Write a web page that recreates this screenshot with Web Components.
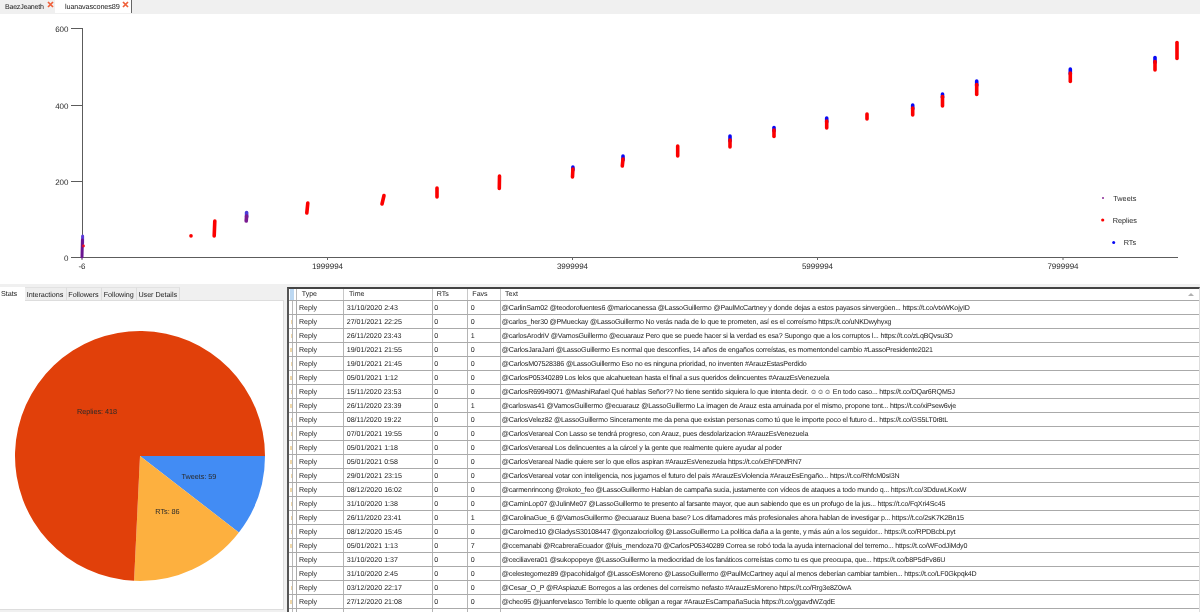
<!DOCTYPE html>
<html>
<head>
<meta charset="utf-8">
<title>Tweets</title>
<style>
  html, body { margin: 0; padding: 0; height: 100%; overflow: hidden; background: #f0f0f0; }
  body { font-family: "Liberation Sans", Arial, sans-serif; color: #222; text-rendering: geometricPrecision; }
  app-shell { filter: blur(0.3px); }
</style>
</head>
<body>
<app-shell>
  <doc-tabs slot="tabs"></doc-tabs>
  <scatter-chart slot="chart"></scatter-chart>
  <side-panel slot="side">
    <pie-chart></pie-chart>
  </side-panel>
  <tweet-grid slot="grid"></tweet-grid>
</app-shell>

<script>
// Outer layout: tab strip, chart, then the two bottom panes
class AppShell extends HTMLElement {
  constructor() {
    super();
    this.attachShadow({ mode: 'open' });
    this.shadowRoot.innerHTML = `
      <style>
        :host { display: flex; flex-direction: column; width: 1200px; height: 612px; overflow: hidden; }
        .bottom { display: flex; flex: 1; min-height: 0; gap: 3px; background: #f0f0f0; }
      </style>
      <slot name="tabs"></slot>
      <slot name="chart"></slot>
      <div class="bottom">
        <slot name="side"></slot>
        <slot name="grid"></slot>
      </div>
    `;
  }
}

// Top strip with the closable account tabs
class DocTabs extends HTMLElement {
  constructor() {
    super();
    this.attachShadow({ mode: 'open' });
  }

  connectedCallback() {
    const close = `<svg width="7" height="7" viewBox="0 0 7 7"><path d="M1 1L6 6M6 1L1 6" stroke="#f0603a" stroke-width="1.7"/></svg>`;
    this.shadowRoot.innerHTML = `
      <style>
        :host { display: flex; height: 14px; background: #f0f0f0; color: #222; box-sizing: border-box; white-space: nowrap; }
        .tab { display: flex; align-items: center; height: 13px; box-sizing: border-box; flex: none; }
        .one { width: 55px; padding-left: 5px; gap: 3px; font-size: 7.1px; letter-spacing: -0.25px; }
        .two { width: 77px; padding-left: 10px; gap: 2px; font-size: 7.3px; letter-spacing: -0.15px; background: #fff; border-right: 1px solid #666; }
        svg { display: block; flex: none; margin-top: -4px; }
      </style>
      <div class="tab one"><span>BaezJeaneth</span>${close}</div>
      <div class="tab two"><span>luanavascones89</span>${close}</div>
    `;
  }
}

// Scatter plot, points are drawn as short strokes per tweet cluster
class ScatterChart extends HTMLElement {
  constructor() {
    super();
    this.attachShadow({ mode: 'open' });
  }

  connectedCallback() {
    // x1, y1 (top), x2, y2 (bottom), blue part on top in px
    const clusters = [
      [191, 235.7, 191, 235.9, 0],
      [214.8, 221, 214.2, 236, 0],
      [307.8, 203, 306.8, 213, 0],
      [384, 195.5, 382, 204, 0],
      [437, 188, 437, 197, 0],
      [499.5, 176, 499.3, 188.5, 0],
      [572.9, 167, 572.5, 177, 2],
      [623, 156, 622.3, 166, 3],
      [677.7, 146, 677.7, 156, 0],
      [730, 136, 730, 147, 4],
      [774, 127.5, 774, 136.5, 2.5],
      [826.7, 118, 826.7, 128, 3],
      [867, 114, 867, 119, 0],
      [912.7, 105, 912.7, 115, 3],
      [942.5, 94, 942.5, 106, 2.5],
      [976.7, 81, 976.7, 94.5, 3.5],
      [1070.3, 69, 1070.3, 81.5, 4],
      [1155, 57.5, 1155, 70, 4],
      [1177, 42.5, 1177, 58.5, 0]
    ];
    let pts = '';
    for (const [x1, y1, x2, y2, blue] of clusters) {
      if (blue) pts += `<line x1="${x1}" y1="${y1}" x2="${x1}" y2="${y1 + blue + 1}" stroke="#0808f4" stroke-width="3.6" stroke-linecap="round"/>`;
      pts += `<line x1="${x1}" y1="${y1 + blue}" x2="${x2}" y2="${y2}" stroke="#fb0000" stroke-width="3.6" stroke-linecap="round"/>`;
    }
    const yTicks = [[600, 14], [400, 91], [200, 167], [0, 243]];
    const xTicks = [['-6', 82], ['1999994', 327.5], ['3999994', 572.5], ['5999994', 817.5], ['7999994', 1063]];
    this.shadowRoot.innerHTML = `
      <style>
        :host { display: block; height: 270px; background: #fff; }
        svg { display: block; }
        text { font-family: "Liberation Sans", Arial, sans-serif; font-size: 8px; fill: #2a2a2a; }
        .lg { font-size: 7.3px; }
      </style>
      <svg width="1200" height="270" viewBox="0 14 1200 270" xmlns="http://www.w3.org/2000/svg">
        <path d="M82.5 28V257.5H1178" fill="none" stroke="#5c5c5c" stroke-width="1"/>
        ${yTicks.map(([v, y]) => `
          <line x1="71" x2="82" y1="${y + 14.5}" y2="${y + 14.5}" stroke="#5c5c5c"/>
          <text x="68.5" y="${y + 17.5}" text-anchor="end">${v}</text>`).join('')}
        ${xTicks.map(([v, x]) => `
          <line x1="${x}" x2="${x}" y1="257" y2="260" stroke="#666"/>
          <text x="${x}" y="269" text-anchor="middle">${v}</text>`).join('')}
        <line x1="82.6" y1="236" x2="82.6" y2="243" stroke="#5a3ad8" stroke-width="3" stroke-linecap="round"/>
        <line x1="82.4" y1="240" x2="82" y2="257" stroke="#6a1590" stroke-width="3" stroke-linecap="round"/>
        <circle cx="83.5" cy="246" r="1.4" fill="#f01020"/>
        <line x1="246.6" y1="212.5" x2="246.6" y2="217" stroke="#4a3ad8" stroke-width="3.6" stroke-linecap="round"/>
        <line x1="246.6" y1="216" x2="246.2" y2="221" stroke="#7a1a90" stroke-width="3.6" stroke-linecap="round"/>
        ${pts}
        <circle cx="1103" cy="198" r="1" fill="#8a2a96"/>
        <text class="lg" x="1113.3" y="200.7">Tweets</text>
        <circle cx="1102.7" cy="220" r="1.6" fill="#fb0000"/>
        <text class="lg" x="1112.7" y="222.7">Replies</text>
        <circle cx="1113.7" cy="242.5" r="1.5" fill="#0808f4"/>
        <text class="lg" x="1123.7" y="245">RTs</text>
      </svg>
    `;
  }
}

// Left pane with the WinForms style tabs
class SidePanel extends HTMLElement {
  constructor() {
    super();
    this.attachShadow({ mode: 'open' });
  }

  connectedCallback() {
    const tabs = ['Stats', 'Interactions', 'Followers', 'Following', 'User Details'];
    const widths = [24.5, 42, 35, 35.5, 42.5];
    this.shadowRoot.innerHTML = `
      <style>
        :host { display: flex; flex-direction: column; width: 284px; box-sizing: border-box; padding: 3px 0 2px; font-size: 7.2px; letter-spacing: -0.05px; color: #222; white-space: nowrap; }
        .bar { display: flex; height: 13px; align-items: flex-end; }
        .tab { height: 13px; box-sizing: border-box; border-right: 1px solid #ddd; border-top: 1px solid #e2e2e2; background: #eee; line-height: 13px; text-align: center; }
        .tab.on { background: #fff; border: 0; text-align: left; padding-left: 1px; height: 14px; margin-bottom: -1px; position: relative; line-height: 13px; }
        .body { flex: 1; min-height: 0; overflow: hidden; background: #fff; border: 1px solid #ddd; border-left: 0; }
      </style>
      <div class="bar">
        ${tabs.map((t, i) => `<div class="tab ${i === 0 ? 'on' : ''}" style="width:${widths[i]}px">${t}</div>`).join('')}
      </div>
      <div class="body"><slot></slot></div>
    `;
  }
}

// Pie drawn from the series values, clockwise from 3 o'clock
class PieChart extends HTMLElement {
  constructor() {
    super();
    this.attachShadow({ mode: 'open' });
  }

  connectedCallback() {
    const series = [
      { name: 'Tweets', value: 59, color: '#428cf4', lx: 199, ly: 478 },
      { name: 'RTs', value: 86, color: '#fdb03f', lx: 167.5, ly: 512.7 },
      { name: 'Replies', value: 418, color: '#e1400a', lx: 97, ly: 412.5 }
    ];
    const total = series.reduce((s, a) => s + a.value, 0);
    const cx = 140, cy = 455, r = 125;
    // pane body starts at y=300
    const top = 300;
    let angle = 0;
    const slices = series.map((s) => {
      const next = angle + s.value / total * Math.PI * 2;
      const large = next - angle > Math.PI ? 1 : 0;
      const d = `M${cx} ${cy - top}L${cx + r * Math.cos(angle)} ${cy - top + r * Math.sin(angle)}A${r} ${r} 0 ${large} 1 ${cx + r * Math.cos(next)} ${cy - top + r * Math.sin(next)}Z`;
      angle = next;
      return `<path d="${d}" fill="${s.color}"/>`;
    }).join('');
    const labels = series.map((s) =>
      `<text x="${s.lx}" y="${s.ly - top}" text-anchor="middle">${s.name}: ${s.value}</text>`).join('');
    this.shadowRoot.innerHTML = `
      <style>
        :host { display: block; }
        svg { display: block; }
        text { font-family: "Liberation Sans", Arial, sans-serif; font-size: 7.3px; fill: #2a2a2a; }
      </style>
      <svg width="283" height="309" viewBox="0 0 283 309" xmlns="http://www.w3.org/2000/svg">${slices}${labels}</svg>
    `;
  }
}

const GRID_COLUMNS = '8px 47px 88.5px 35.5px 33px 1fr';

// One data row of the grid
class GridRow extends HTMLElement {
  constructor() {
    super();
    this.attachShadow({ mode: 'open' });
  }

  connectedCallback() {
    const cols = (this.getAttribute('cells') || '').split('|');
    const mark = this.getAttribute('mark') || '0';
    this.shadowRoot.innerHTML = `
      <style>
        :host { display: grid; grid-template-columns: ${GRID_COLUMNS}; height: 14px; box-sizing: border-box; border-bottom: 1px solid #aaa; font-size: 7.1px; line-height: 15px; color: #222; white-space: nowrap; }
        .cell { border-right: 1px solid #b4b4b4; overflow: hidden; }
        .cell:nth-of-type(2) { padding-left: 2px; }
        .cell:nth-of-type(3) { padding-left: 2.7px; }
        .cell:nth-of-type(4) { padding-left: 1.8px; }
        .cell:nth-of-type(5) { padding-left: 2.7px; }
        .cell:nth-of-type(6) { padding-left: 0.8px; border-right: 0; letter-spacing: -0.18px; }
        .hd { box-sizing: border-box; border-right: 1px solid #aaa; display: flex; align-items: center; }
        .hd i { display: block; width: 3px; height: 100%; box-sizing: content-box; border-right: 1px solid #b8b8b8; position: relative; }
        .hd i::after { content: ""; position: absolute; right: 0; top: 5px; width: ${mark}px; height: 4px; background: #f0d8a8; }
      </style>
      <div class="hd"><i></i></div>
      ${cols.map((c) => `<div class="cell">${c}</div>`).join('')}
    `;
  }
}

// Tweets table with header row and vertical scroll arrow
class TweetGrid extends HTMLElement {
  constructor() {
    super();
    this.attachShadow({ mode: 'open' });
  }

  connectedCallback() {
    const rows = [
      ['31/10/2020 2:43', 0, 0, '@CarlinSam02 @teodorofuentes6 @mariocanessa @LassoGuillermo @PaulMcCartney y donde dejas a estos payasos sinvergüen... https://t.co/vtxWKojyID', 0],
      ['27/01/2021 22:25', 0, 0, '@carlos_her30 @PMueckay @LassoGuillermo No verás nada de lo que te prometen, así es el correísmo https://t.co/uNKDwyhyxg', 1],
      ['26/11/2020 23:43', 0, 1, '@carlosArodriV @VamosGuillermo @ecuarauz Pero que se puede hacer si la verdad es esa? Supongo que a los corruptos l... https://t.co/zLqBQvsu3D', 1],
      ['19/01/2021 21:55', 0, 0, '@CarlosJaraJarri @LassoGuillermo Es normal que desconfíes, 14 años de engaños correístas, es momentondel cambio #LassoPresidente2021', 2],
      ['19/01/2021 21:45', 0, 0, '@CarlosM07528386 @LassoGuillermo Eso no es ninguna prioridad, no inventen #ArauzEstasPerdido', 1],
      ['05/01/2021 1:12', 0, 0, '@CarlosP05340289 Los lelos que alcahuetean hasta el final a sus queridos delincuentes #ArauzEsVenezuela', 2],
      ['15/11/2020 23:53', 0, 0, '@CarlosR69949071 @MashiRafael Qué hablas Señor?? No tiene sentido siquiera lo que intenta decir. ☺☺☺  En todo caso... https://t.co/DQar6RQM5J', 1],
      ['26/11/2020 23:39', 0, 1, '@carlosvas41 @VamosGuillermo @ecuarauz @LassoGuillermo La imagen de Arauz esta arruinada por el mismo, propone tont... https://t.co/xiPsew6vje', 2],
      ['08/11/2020 19:22', 0, 0, '@CarlosVelez82 @LassoGuillermo Sinceramente me da pena que existan personas como tú que le importe poco el futuro d... https://t.co/GS5LT0r8tL', 1],
      ['07/01/2021 19:55', 0, 0, '@CarlosVerareal Con Lasso se tendrá progreso, con Arauz, pues desdolarizacion #ArauzEsVenezuela', 1],
      ['05/01/2021 1:18', 0, 0, '@CarlosVerareal Los delincuentes a la cárcel y la gente que realmente quiere ayudar al poder', 2],
      ['05/01/2021 0:58', 0, 0, '@CarlosVerareal Nadie quiere ser lo que ellos aspiran #ArauzEsVenezuela https://t.co/xEhFDNfRN7', 2],
      ['29/01/2021 23:15', 0, 0, '@CarlosVerareal votar con inteligencia, nos jugamos el futuro del pais #ArauzEsViolencia #ArauzEsEngaño... https://t.co/RhfcM0sI3N', 1],
      ['08/12/2020 16:02', 0, 0, '@carmenrincong @rokoto_feo @LassoGuillermo Hablan de campaña sucia, justamente con vídeos de ataques a todo mundo q... https://t.co/3DduwLKoxW', 2],
      ['31/10/2020 1:38', 0, 0, '@CaminLop07 @JulinMe07 @LassoGuillermo te presento al farsante mayor, que aun sabiendo que es un profugo de la jus... https://t.co/FqXri4Sc45', 1],
      ['26/11/2020 23:41', 0, 1, '@CarolinaGue_6 @VamosGuillermo @ecuarauz Buena base? Los difamadores más profesionales ahora hablan de investigar p... https://t.co/2sK7K2Bn15', 1],
      ['08/12/2020 15:45', 0, 0, '@Carolmed10 @GladysS30108447 @gonzalocriollog @LassoGuillermo La política daña a la gente, y más aún a los seguidor... https://t.co/RPDBcbLpyt', 1],
      ['05/01/2021 1:13', 0, 7, '@ccemanabi @RcabreraEcuador @luis_mendoza70 @CarlosP05340289 Correa se robó toda la ayuda internacional del terremo... https://t.co/WFodJiMdy0', 2],
      ['31/10/2020 1:37', 0, 0, '@ceciliavera01 @sukopopeye @LassoGuillermo la mediocridad de los fanáticos correístas como tu es que preocupa, que... https://t.co/b8P5dFv86U', 0],
      ['31/10/2020 2:45', 0, 0, '@celestegomez89 @pacohidalgof @LassoEsMoreno @LassoGuillermo @PaulMcCartney aquí al menos deberían cambiar tambien... https://t.co/LF0Gkpqk4D', 0],
      ['03/12/2020 22:17', 0, 0, '@Cesar_O_P @RAspiazuE Borregos a las ordenes del correismo nefasto #ArauzEsMoreno https://t.co/Rrg3e8Z0wA', 1],
      ['27/12/2020 21:08', 0, 0, '@cheo95 @juanfervelasco Terrible lo quente obligan a regar #ArauzEsCampañaSucia https://t.co/ggavdWZqdE', 2]
    ];
    this.shadowRoot.innerHTML = `
      <style>
        :host { display: block; flex: 1; min-width: 0; margin-top: 3px; box-sizing: border-box; background: #fff; border-top: 2px solid #444; border-left: 2px solid #555; border-right: 1px solid #ddd; overflow: hidden; }
        .head { display: grid; grid-template-columns: ${GRID_COLUMNS}; height: 11px; border-bottom: 1px solid #aaa; box-sizing: content-box; font-size: 7.1px; line-height: 11px; color: #222; position: relative; }
        .head > div { border-right: 1px solid #c8c8c8; }
        .head > div:nth-child(2) { padding-left: 4.7px; }
        .head > div:nth-child(3) { padding-left: 5px; }
        .head > div:nth-child(4) { padding-left: 4.2px; }
        .head > div:nth-child(5) { padding-left: 4.3px; }
        .head > div:nth-child(6) { padding-left: 4px; border-right: 0; }
        .head > .sel { background: linear-gradient(90deg, #fff 0 1px, #bcd8f2 1px 4.5px, #fff 4.5px); border-right: 1px solid #bbb; }
        .arrow { position: absolute; right: 5px; top: 4px; width: 0; height: 0; border-left: 3px solid transparent; border-right: 3px solid transparent; border-bottom: 3px solid #b0b0b0; }
      </style>
      <div class="head">
        <div class="sel"></div><div>Type</div><div>Time</div><div>RTs</div><div>Favs</div><div>Text</div>
        <span class="arrow"></span>
      </div>
      <div id="rows"></div>
    `;
    const box = this.shadowRoot.getElementById('rows');
    for (const [time, rts, favs, text, mark] of rows) {
      const row = document.createElement('grid-row');
      row.setAttribute('cells', ['Reply', time, rts, favs, text].join('|'));
      row.setAttribute('mark', mark);
      box.appendChild(row);
    }
    const last = document.createElement('grid-row');
    last.setAttribute('cells', '||||');
    box.appendChild(last);
  }
}

customElements.define('app-shell', AppShell);
customElements.define('doc-tabs', DocTabs);
customElements.define('scatter-chart', ScatterChart);
customElements.define('side-panel', SidePanel);
customElements.define('pie-chart', PieChart);
customElements.define('grid-row', GridRow);
customElements.define('tweet-grid', TweetGrid);
</script>
</body>
</html>
